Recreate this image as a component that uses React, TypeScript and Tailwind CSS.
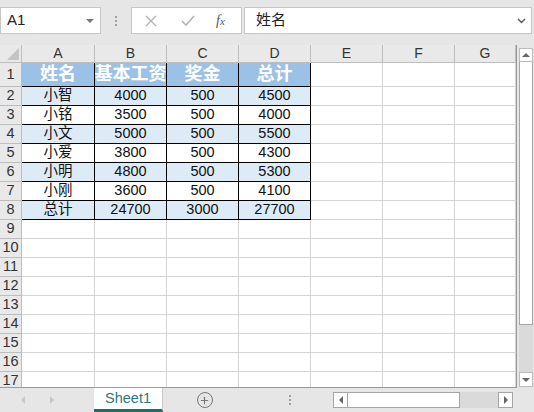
import { Plus } from "lucide-react";

const FONT = "font-['Liberation_Sans','Noto_Sans_CJK_SC',sans-serif]";

const COLS = [
  { key: "A", w: "w-[73px]" },
  { key: "B", w: "w-[72px]" },
  { key: "C", w: "w-[72px]" },
  { key: "D", w: "w-[72px]" },
  { key: "E", w: "w-[72px]" },
  { key: "F", w: "w-[72px]" },
  { key: "G", w: "w-[61px]" },
];

const DATA = [
  ["姓名", "基本工资", "奖金", "总计"],
  ["小智", "4000", "500", "4500"],
  ["小铭", "3500", "500", "4000"],
  ["小文", "5000", "500", "5500"],
  ["小爱", "3800", "500", "4300"],
  ["小明", "4800", "500", "5300"],
  ["小刚", "3600", "500", "4100"],
  ["总计", "24700", "3000", "27700"],
];

function Triangle({ dir, className }: { dir: "up" | "down" | "left" | "right"; className?: string }) {
  const pts = {
    up: "0,5 4,1 8,5",
    down: "0,1 8,1 4,5",
    left: "5,0 5,8 1,4",
    right: "1,0 1,8 5,4",
  }[dir];
  const size = dir === "up" || dir === "down" ? { w: 8, h: 6 } : { w: 6, h: 8 };
  return (
    <svg width={size.w} height={size.h} viewBox={`0 0 ${size.w} ${size.h}`} className={className}>
      <polygon points={pts} fill="currentColor" />
    </svg>
  );
}

function Dots() {
  return (
    <>
      <span className="w-[2px] h-[2px] bg-[#a0a0a0]" />
      <span className="w-[2px] h-[2px] bg-[#a0a0a0]" />
      <span className="w-[2px] h-[2px] bg-[#a0a0a0]" />
    </>
  );
}

function FormulaBar() {
  return (
    <div className="h-[45px] flex items-start pt-[7px] bg-[#e6e6e6]">
      <div className="w-[101px] h-[27px] bg-white border border-[#c6c6c6] flex items-center pl-[6px] pr-[6px]">
        <span className="flex-1 text-[15px] text-[#222]">A1</span>
        <Triangle dir="down" className="text-[#777]" />
      </div>
      <div className="w-[30px] h-[27px] flex flex-col items-center justify-center gap-[2px]">
        <Dots />
      </div>
      <div className="w-[111px] h-[27px] bg-white border border-[#c6c6c6] flex items-center">
        <svg width="12" height="12" viewBox="0 0 12 12" className="ml-[13px]">
          <path d="M1 1 L11 11 M11 1 L1 11" stroke="#b4b4b4" strokeWidth="1.3" />
        </svg>
        <svg width="14" height="12" viewBox="0 0 14 12" className="ml-[24px]">
          <path d="M1 6 L5 10 L13 1" stroke="#b4b4b4" strokeWidth="1.6" fill="none" />
        </svg>
        <span className="ml-[21px] text-[14px] italic text-[#555] font-['Liberation_Serif',serif]">
          f<span className="text-[11px]">x</span>
        </span>
      </div>
      <div className="ml-[2px] w-[288px] h-[27px] bg-white border border-[#c6c6c6] flex items-center pl-[11px] pr-[5px]">
        <span className="flex-1 text-[15px] text-[#222]">姓名</span>
        <svg width="9" height="6" viewBox="0 0 9 6">
          <path d="M1 1 L4.5 4.5 L8 1" stroke="#555" strokeWidth="1.4" fill="none" />
        </svg>
      </div>
    </div>
  );
}

function HeaderRow() {
  return (
    <div className="flex h-[18px] bg-[#e9e9e9]">
      <div className="w-[22px] h-full border-r border-b border-[#bdbdbd] relative">
        <svg width="12" height="12" viewBox="0 0 12 12" className="absolute right-[2px] bottom-[2px]">
          <polygon points="12,0 12,12 0,12" fill="#c4c4c4" />
        </svg>
      </div>
      {COLS.map((c) => (
        <div
          key={c.key}
          className={`${c.w} h-full border-r border-b border-[#bdbdbd] flex items-center justify-center text-[14px] text-[#333]`}
        >
          {c.key}
        </div>
      ))}
    </div>
  );
}

function Row({ n }: { n: number }) {
  const vals = DATA[n - 1];
  const inTable = n <= 8;
  const isHead = n === 1;
  const shaded = inTable && !isHead && n % 2 === 0;
  return (
    <div className={`flex shrink-0 ${isHead ? "h-[24px]" : "h-[19px]"}`}>
      <div className="w-[22px] h-full bg-[#e9e9e9] border-r border-b border-[#bdbdbd] flex items-center justify-center text-[14.5px] text-[#333]">
        {n}
      </div>
      {COLS.map((c, i) => {
        const table = inTable && i < 4;
        let cls = `${c.w} h-full border-r border-b flex items-center justify-center whitespace-nowrap overflow-hidden `;
        if (table) {
          cls += "border-black ";
          if (isHead) cls += "bg-[#9bc2e6] text-white text-[18px] font-semibold";
          else cls += `${shaded ? "bg-[#ddebf7]" : "bg-white"} text-[#111] text-[14.5px]`;
        } else {
          cls += "border-[#d4d4d4] bg-white";
        }
        return (
          <div key={c.key} className={cls}>
            {table ? vals[i] : ""}
          </div>
        );
      })}
    </div>
  );
}

function VScroll() {
  return (
    <div className="w-[14px] h-full flex flex-col pt-[3px]">
      <div className="h-[14px] bg-white border border-[#bcbcbc] flex items-center justify-center">
        <Triangle dir="up" className="text-[#666]" />
      </div>
      <div className="h-[263px] bg-white border border-[#a6a6a6] border-t-0" />
      <div className="flex-1 bg-[#dadada]" />
      <div className="h-[15px] bg-white border border-[#bcbcbc] flex items-center justify-center">
        <Triangle dir="down" className="text-[#666]" />
      </div>
      <div className="h-[1px]" />
    </div>
  );
}

function TabBar() {
  return (
    <div className="h-[24px] bg-[#e6e6e6] flex items-center">
      <div className="w-[94px] flex items-center">
        <Triangle dir="left" className="ml-[20px] text-[#c8c8c8]" />
        <Triangle dir="right" className="ml-[23px] text-[#c8c8c8]" />
      </div>
      <div className="w-[69px] h-full bg-white border-r border-r-[#c6c6c6] border-b-[3px] border-b-[#1f6e6c] flex items-center justify-center text-[14.5px] text-[#2a7a78]">
        Sheet1
      </div>
      <div className="w-[83px] flex justify-center">
        <span className="w-[16px] h-[16px] rounded-full border-[1.5px] border-[#777] flex items-center justify-center">
          <Plus size={11} strokeWidth={2.5} className="text-[#777]" />
        </span>
      </div>
      <div className="w-[87px] flex flex-col items-center gap-[2px]">
        <Dots />
      </div>
      <div className="w-[180px] h-[16px] flex">
        <div className="w-[15px] h-full bg-white border border-[#a6a6a6] flex items-center justify-center">
          <Triangle dir="left" className="text-[#666]" />
        </div>
        <div className="w-[112px] h-full bg-white border-y border-r border-[#a6a6a6]" />
        <div className="flex-1 h-full bg-[#dadada]" />
        <div className="w-[15px] h-full bg-white border border-[#a6a6a6] flex items-center justify-center">
          <Triangle dir="right" className="text-[#666]" />
        </div>
      </div>
    </div>
  );
}

export default function App() {
  const rows = Array.from({ length: 17 }, (_, i) => i + 1);
  return (
    <div className={`w-[534px] h-[412px] overflow-hidden bg-[#e6e6e6] flex flex-col ${FONT}`}>
      <FormulaBar />
      <div className="h-[343px] flex">
        <div className="w-[517px] h-full flex flex-col overflow-hidden border-r border-b border-[#9a9a9a]">
          <HeaderRow />
          {rows.map((n) => (
            <Row key={n} n={n} />
          ))}
        </div>
        <div className="w-[2px]" />
        <VScroll />
      </div>
      <TabBar />
    </div>
  );
}
